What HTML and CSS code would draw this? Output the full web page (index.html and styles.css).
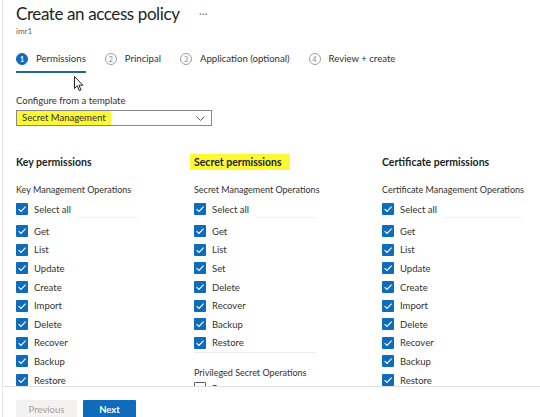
FILE: index.html
```html
<!DOCTYPE html>
<html lang="en">
<head>
  <meta charset="UTF-8" />
  <title>Create an access policy</title>
  <link rel="stylesheet" href="styles.css">
</head>
<body>
  <div class="page">
    <div class="main">
      <header>
        <h1>Create an access policy <span class="more">&middot;&middot;&middot;</span></h1>
        <p class="sub">imr1</p>
      </header>

      <nav class="tabs">
        <div class="tab active"><span class="num">1</span>Permissions</div>
        <div class="tab"><span class="num">2</span>Principal</div>
        <div class="tab"><span class="num">3</span>Application (optional)</div>
        <div class="tab"><span class="num">4</span>Review + create</div>
      </nav>

      <label class="field-label">Configure from a template</label>
      <div class="dropdown">
        <span class="mark">Secret Management</span>
        <svg class="chev" width="9" height="5" viewBox="0 0 9 5"><path d="M0.5 0.5 L4.5 4.5 L8.5 0.5" fill="none" stroke="#605e5c" stroke-width="1"/></svg>
      </div>

      <div class="columns">
        <section class="col col-key">
          <h2>Key permissions</h2>
          <p class="ops">Key Management Operations</p>
          <div class="row select-all"><span class="box"></span>Select all<span class="sep"></span></div>
          <div class="row"><span class="box"></span>Get</div>
          <div class="row"><span class="box"></span>List</div>
          <div class="row"><span class="box"></span>Update</div>
          <div class="row"><span class="box"></span>Create</div>
          <div class="row"><span class="box"></span>Import</div>
          <div class="row"><span class="box"></span>Delete</div>
          <div class="row"><span class="box"></span>Recover</div>
          <div class="row"><span class="box"></span>Backup</div>
          <div class="row"><span class="box"></span>Restore</div>
        </section>

        <section class="col col-secret">
          <h2><span class="mark">Secret permissions</span></h2>
          <p class="ops">Secret Management Operations</p>
          <div class="row select-all"><span class="box"></span>Select all<span class="sep"></span></div>
          <div class="row"><span class="box"></span>Get</div>
          <div class="row"><span class="box"></span>List</div>
          <div class="row"><span class="box"></span>Set</div>
          <div class="row"><span class="box"></span>Delete</div>
          <div class="row"><span class="box"></span>Recover</div>
          <div class="row"><span class="box"></span>Backup</div>
          <div class="row"><span class="box"></span>Restore</div>
          <div class="group-line"></div>
          <p class="ops ops-priv">Privileged Secret Operations</p>
          <div class="row"><span class="box off"></span>Purge</div>
        </section>

        <section class="col">
          <h2>Certificate permissions</h2>
          <p class="ops">Certificate Management Operations</p>
          <div class="row select-all"><span class="box"></span>Select all<span class="sep wide"></span></div>
          <div class="row"><span class="box"></span>Get</div>
          <div class="row"><span class="box"></span>List</div>
          <div class="row"><span class="box"></span>Update</div>
          <div class="row"><span class="box"></span>Create</div>
          <div class="row"><span class="box"></span>Import</div>
          <div class="row"><span class="box"></span>Delete</div>
          <div class="row"><span class="box"></span>Recover</div>
          <div class="row"><span class="box"></span>Backup</div>
          <div class="row"><span class="box"></span>Restore</div>
        </section>
      </div>

      <!-- mouse pointer from the screenshot -->
      <svg class="cursor" width="10" height="16" viewBox="0 0 10 16">
        <path d="M0.5 0.5 L0.5 12.5 L3.3 9.8 L5.3 14.6 L7 13.9 L5 9.2 L8.8 9.2 Z" fill="#fff" stroke="#222" stroke-width="1"/>
      </svg>
    </div>

    <footer>
      <button class="btn btn-prev" disabled>Previous</button>
      <button class="btn btn-next">Next</button>
    </footer>
  </div>
</body>
</html>
```

FILE: styles.css
```css
body {
  margin: 0;
  background: #fff;
  color: #323130;
  font-family: Lato, "Open Sans", sans-serif;
}

.page {
  height: 417px;
  display: flex;
  flex-direction: column;
  border-left: 1px solid #e8e8e8;
  margin-left: 2px;
}

.main {
  flex: 1;
  overflow: hidden;
  position: relative;
  padding-left: 13px;
}

h1 {
  margin: 0;
  font-size: 17px;
  font-weight: 400;
  line-height: 22px;
  padding-top: 3px;
  color: #201f1e;
  letter-spacing: -0.4px;
}

.more {
  font-size: 11px;
  color: #8a8886;
  margin-left: 16px;
  vertical-align: 2px;
  letter-spacing: 0;
}

.sub {
  margin: 1px 0 0;
  font-size: 8px;
  line-height: 10px;
  color: #605e5c;
}

.tabs {
  display: flex;
  margin-top: 12px;
}

.tab {
  display: flex;
  align-items: center;
  gap: 8px;
  font-size: 9.6px;
  line-height: 16px;
  padding: 3px 0 4px;
  margin-right: 19px;
  border-bottom: 2px solid transparent;
  color: #323130;
}

.tab.active {
  border-bottom-color: #1d6a96;
}

.num {
  width: 10px;
  height: 10px;
  border: 1px solid #a19f9d;
  border-radius: 50%;
  font-size: 7px;
  line-height: 10px;
  text-align: center;
  color: #8a8886;
}

.tab.active .num {
  background: #0f6cbd;
  border-color: #0f6cbd;
  color: #fff;
  font-weight: 700;
}

.field-label {
  display: block;
  margin-top: 21px;
  font-size: 9.5px;
  line-height: 14px;
}

.dropdown {
  margin-top: 2px;
  width: 196px;
  height: 16px;
  box-sizing: border-box;
  border: 1px solid #8a8886;
  display: flex;
  align-items: center;
  justify-content: space-between;
  font-size: 9.5px;
}

.dropdown .mark {
  height: 14px;
  line-height: 14px;
  width: 89px;
  padding-left: 5px;
}

.chev {
  margin-right: 6px;
}

.mark {
  background: #fdf834;
}

.columns {
  display: flex;
  margin-top: 28px;
}

.col-key {
  width: 178px;
}

.col-secret {
  width: 188px;
}

h2 {
  margin: 0;
  font-size: 10.5px;
  font-weight: 700;
  line-height: 16px;
  color: #201f1e;
}

h2 .mark {
  display: inline-block;
  margin-left: -4px;
  padding: 0 8px 0 4px;
}

.ops {
  margin: 13px 0 0;
  font-size: 9px;
  line-height: 14px;
}

.row {
  display: flex;
  align-items: center;
  height: 18.6px;
  font-size: 9.5px;
  white-space: nowrap;
}

.select-all {
  margin-top: 3px;
  height: 18px;
  margin-bottom: 4px;
  position: relative;
}

.sep {
  position: absolute;
  left: 62px;
  bottom: 0;
  width: 60px;
  border-bottom: 1px solid #f0f0f0;
}

.sep.wide {
  width: 78px;
}

.box {
  width: 12px;
  height: 12px;
  margin-right: 6px;
  border-radius: 1px;
  background: #0f6cbd url("data:image/svg+xml,%3Csvg xmlns='http://www.w3.org/2000/svg' viewBox='0 0 12 12'%3E%3Cpath d='M2.6 6.2 L5 8.5 L9.6 3.6' fill='none' stroke='white' stroke-width='1.1'/%3E%3C/svg%3E") center / 12px 12px no-repeat;
  flex: none;
}

.box.off {
  background: #fff;
  border: 1px solid #605e5c;
  box-sizing: border-box;
}

.group-line {
  width: 122px;
  border-top: 1px solid #edebe9;
}

.ops-priv {
  margin-top: 13px;
}

.ops-priv + .row {
  margin-top: -1px;
}

.cursor {
  position: absolute;
  left: 71px;
  top: 76px;
}

footer {
  height: 31px;
  border-top: 1px solid #e1dfdd;
  padding: 13px 0 0 13px;
  display: flex;
  align-items: flex-start;
  gap: 6px;
  box-sizing: border-box;
}

.btn {
  height: 18px;
  padding: 0;
  border: none;
  font-family: inherit;
  font-size: 9.5px;
  border-radius: 1px;
}

.btn-prev {
  width: 61px;
  background: #f3f2f1;
  color: #a19f9d;
}

.btn-next {
  width: 53px;
  background: #0f6cbd;
  color: #fff;
  font-weight: 700;
}
```
